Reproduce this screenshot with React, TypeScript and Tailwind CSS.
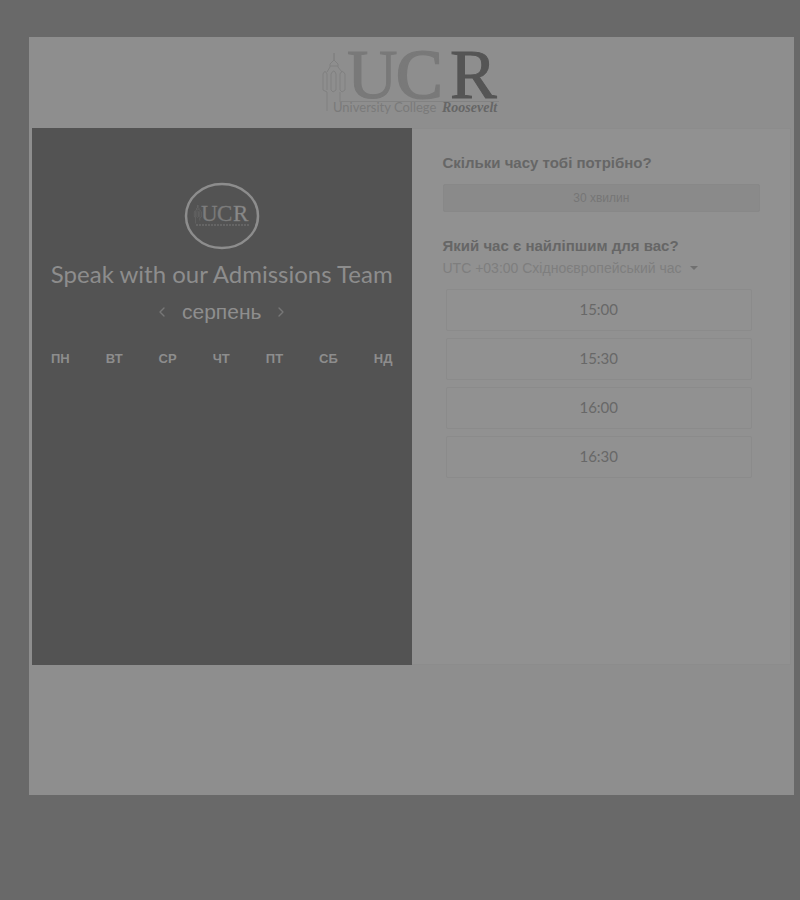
import { ChevronLeft, ChevronRight } from "lucide-react";

const days = ["ПН", "ВТ", "СР", "ЧТ", "ПТ", "СБ", "НД"];
const times = ["15:00", "15:30", "16:00", "16:30"];
const serif = '"Liberation Serif", serif';

function Tower() {
  return (
    <path
      d="M5 61V42L1 40V24q2-5 4 0v16M9 40V24q3-6 5 0v16l-3 2-2-2M18 40V24q2-5 5 0v16l-3 2-2-2M5 22l3-5V14l4-4V3v7l4 4v3l4 5M8 16h8M18 42v10"
      fill="none"
      stroke="#808080"
      strokeWidth="1"
    />
  );
}

function Logo() {
  return (
    <svg viewBox="0 0 180 68" className="h-[68px] w-[180px] overflow-visible" role="img" aria-label="University College Roosevelt">
      <Tower />
      <path d="M18 51.500H177" fill="none" stroke="#828282" />
      <g fontFamily={serif} fontSize="70" fill="#797979" stroke="#797979">
        <text x="25" y="48">U</text>
        <text x="74" y="48" strokeWidth="2">C</text>
        <text x="128" y="48" fill="#555555" stroke="#555555">R</text>
      </g>
      <text x="11" y="62" fill="#7a7a7a" fontFamily="Lato, sans-serif" fontSize="13">University College</text>
      <text x="120" y="62" fill="#666666" fontFamily={serif} fontSize="14" fontStyle="italic" fontWeight="bold">Roosevelt</text>
    </svg>
  );
}

function Badge() {
  return (
    <svg viewBox="0 0 76 68" className="h-[68px] w-[76px]" role="img" aria-label="UCR">
      <ellipse cx="38" cy="34" rx="36" ry="32" fill="none" stroke="#8d8d8d" strokeWidth="2.5" />
      <g transform="translate(10 22) scale(.32)">
        <Tower />
      </g>
      <g fontFamily={serif} fontSize="23" fill="#7c7c7c" stroke="#7c7c7c" strokeWidth=".3">
        <text x="17" y="39">U</text>
        <text x="33" y="39">C</text>
        <text x="49" y="39" fill="#8a8a8a">R</text>
      </g>
      <path d="M12 43H66" stroke="#6c6c6c" strokeWidth="1.5" strokeDasharray="2 1" />
    </svg>
  );
}

export default function App() {
  return (
    <div className="min-h-screen bg-[#696969] pt-[37px] pr-[6px] pb-[105px] pl-[29px] font-['Liberation_Sans',sans-serif]">
      <main className="bg-[#8e8e8e] px-[3px] pb-[130px]">
        <header className="flex justify-center pt-[13px] pb-[10px]">
          <Logo />
        </header>
        <div className="grid min-h-[537px] grid-cols-2">
          <section className="flex flex-col items-center bg-[#535353] px-4 pt-[54px] text-[#8d8d8d]">
            <Badge />
            <h1 className="mt-2 font-[Lato] text-[24px] leading-8 whitespace-nowrap">Speak with our Admissions Team</h1>
            <div className="mt-2 flex h-7 items-center gap-1">
              <button aria-label="Попередній місяць" className="p-1 text-[#777777]"><ChevronLeft size={16} /></button>
              <h2 className="px-1 text-[21px] leading-7 text-[#8e8e8e]">серпень</h2>
              <button aria-label="Наступний місяць" className="p-1 text-[#777777]"><ChevronRight size={16} /></button>
            </div>
            <div className="mt-[23px] flex w-full justify-between px-[3px] text-[13px] leading-5 font-bold">
              {days.map((day) => <span key={day}>{day}</span>)}
            </div>
          </section>
          <section className="border-y border-r border-[#8c8c8c] bg-[#919191] pt-6 pr-[30px] pl-[31px] text-[#666666]">
            <h2 className="text-[15px] leading-5 font-bold">Скільки часу тобі потрібно?</h2>
            <button className="mt-[11px] block h-7 w-full rounded-xs border border-[#888888] bg-[#8a8a8a] text-[12px] text-[#767676]">30 хвилин</button>
            <h2 className="mt-6 text-[15px] leading-5 font-bold">Який час є найліпшим для вас?</h2>
            <button className="mt-[2px] flex h-5 items-center gap-2 text-[14px] whitespace-nowrap text-[#7e7e7e]">
              UTC +03:00 Східноєвропейський час
              <span className="border-x-4 border-t-4 border-x-transparent border-t-[#707070]" />
            </button>
            <div className="mt-[11px] mr-2 ml-[3px] flex flex-col gap-[7px]">
              {times.map((time) => (
                <button key={time} className="h-[42px] rounded-xs border border-[#8b8b8b] pb-[2px] font-[Lato] text-[15px] text-[#686868]">{time}</button>
              ))}
            </div>
          </section>
        </div>
      </main>
    </div>
  );
}
